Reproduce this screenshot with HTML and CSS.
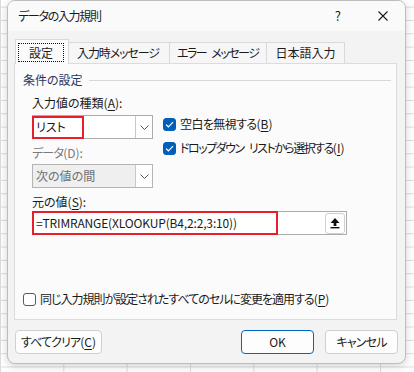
FILE: index.html
```html
<!DOCTYPE html>
<html lang="ja">
<head>
<meta charset="utf-8">
<title>データの入力規則</title>
<link rel="stylesheet" href="styles.css">
</head>
<body>
<div class="dialog">
  <div class="titlebar">
    <span class="title">データの入力規則</span>
    <span class="help">?</span>
    <svg class="close" width="10" height="10" viewBox="0 0 10 10"><path d="M0.5 0.5L9.5 9.5M9.5 0.5L0.5 9.5" stroke="#1a1a1a" stroke-width="1.1" fill="none"/></svg>
  </div>
  <div class="body">
    <div class="tabs">
      <div class="tab active"><span class="focus">設定</span></div>
      <div class="tab tab-input">入力時メッセージ</div>
      <div class="tab tab-error">エラー メッセージ</div>
      <div class="tab">日本語入力</div>
    </div>
    <div class="panel">
      <div class="group"><span>条件の設定</span><i class="rule"></i></div>
      <div class="section">
        <div class="row1">
          <div class="col-left">
            <div class="label">入力値の種類(<u>A</u>):</div>
            <div class="combo">
              <span class="val">リスト</span>
              <span class="drop"><svg width="9" height="5" viewBox="0 0 9 5"><path d="M0.5 0.5L4.5 4.5L8.5 0.5" stroke="#555" fill="none"/></svg></span>
              <span class="mark mark-list"></span>
            </div>
            <div class="label dis"><span class="jp-data">データ</span>(D):</div>
            <div class="combo disabled">
              <span class="val">次の値の間</span>
              <span class="drop"><svg width="9" height="5" viewBox="0 0 9 5"><path d="M0.5 0.5L4.5 4.5L8.5 0.5" stroke="#555" fill="none"/></svg></span>
            </div>
          </div>
          <div class="col-right">
            <div class="check"><span class="box on"><svg width="9" height="7" viewBox="0 0 9 7"><path d="M1 3.6L3.4 5.8L8 1.2" stroke="#fff" stroke-width="1.2" fill="none"/></svg></span><span class="txt"><span class="jp-blank">空白を無視する</span>(<u>B</u>)</span></div>
            <div class="check"><span class="box on"><svg width="9" height="7" viewBox="0 0 9 7"><path d="M1 3.6L3.4 5.8L8 1.2" stroke="#fff" stroke-width="1.2" fill="none"/></svg></span><span class="txt"><span class="jp-drop">ドロップダウン リストから選択する</span>(<u>I</u>)</span></div>
          </div>
        </div>
        <div class="label label-src">元の値(<u>S</u>):</div>
        <div class="source">
          <span class="formula">=TRIMRANGE(XLOOKUP(B4,2:2,3:10))</span>
          <span class="pick"><svg width="10" height="12" viewBox="0 0 10 12"><path d="M5 1L9.5 6H6.4V9H3.6V6H0.5Z" fill="#111"/><rect x="0.5" y="10" width="9" height="1.4" fill="#111"/></svg></span>
          <span class="mark mark-src"></span>
        </div>
      </div>
      <div class="check apply"><span class="box"></span><span class="txt"><span class="jp-apply">同じ入力規則が設定されたすべてのセルに変更を適用する</span>(<u>P</u>)</span></div>
    </div>
    <div class="buttons">
      <button class="btn btn-clear"><span class="jp-clear">すべてクリア</span>(<u>C</u>)</button>
      <span class="spacer"></span>
      <button class="btn btn-ok">OK</button>
      <button class="btn btn-cancel">キャンセル</button>
    </div>
  </div>
</div>
</body>
</html>
```

FILE: styles.css
```css
* { box-sizing: border-box; }
html, body { margin: 0; padding: 0; }
body {
  width: 414px;
  height: 372px;
  overflow: hidden;
  font-family: "Noto Sans CJK JP", "Noto Sans", sans-serif;
  font-size: 12px;
  color: #1a1a1a;
  font-feature-settings: "palt";
  text-autospace: no-autospace;
  background-color: #ffffff;
  background-image:
    linear-gradient(to right, #dcdcdc 1px, transparent 1px),
    linear-gradient(to bottom, #dcdcdc 1px, transparent 1px);
  background-size: 63.33px 13.33px;
  background-position: 0 6.67px;
}
u { text-decoration: underline; text-underline-offset: 2px; }

.dialog {
  margin-left: 7px;
  width: 399px;
  height: 364px;
  background: #f3f3f3;
  border: 1px solid #bdbdbd;
  border-radius: 8px;
  box-shadow: 0 2px 8px rgba(0, 0, 0, 0.18);
  display: flex;
  flex-direction: column;
  overflow: hidden;
}

.titlebar {
  height: 30px;
  flex: none;
  background: #fafafa;
  display: flex;
  align-items: center;
  padding-left: 10px;
  line-height: 16px;
}
.title { flex: 1; letter-spacing: -1.3px; }
.help { margin-right: 37px; font-size: 13px; }
.close { margin-right: 17px; display: block; }

.body {
  flex: 1;
  padding: 8px 8px 9px 6px;
  display: flex;
  flex-direction: column;
}

.tabs {
  height: 24px;
  flex: none;
  display: flex;
  align-items: flex-end;
  padding-left: 1px;
}
.tab {
  height: 21px;
  padding: 0 8px;
  border: 1px solid #d9d9d9;
  border-bottom: none;
  background: #f6f6f6;
  margin-left: -1px;
  line-height: 20px;
  white-space: nowrap;
}
.tab-input { letter-spacing: -1.1px; padding: 0 10px 0 8px; }
.tab-error { letter-spacing: -1.5px; word-spacing: 4px; padding: 0 8px 0 7px; }
.tab.active {
  margin-left: 0;
  height: 25px;
  margin-bottom: -1px;
  background: #fbfbfb;
  position: relative;
  z-index: 1;
  padding: 3px 4px 0 2px;
}
.focus {
  display: block;
  height: 19px;
  line-height: 17px;
  padding: 0 10px;
  border: 1px dotted #111;
}

.panel {
  height: 257px;
  flex: none;
  border: 1px solid #dcdcdc;
  background: #fbfbfb;
  padding: 8px 5px 0 8px;
}

.group {
  display: flex;
  align-items: center;
  gap: 6px;
  height: 16px;
  line-height: 16px;
  color: #25355e;
}
.rule { flex: 1; height: 1px; background: #d7d7d7; }

.section { margin: 7px 0 0 9px; }
.row1 { display: flex; gap: 10px; }
.col-left { width: 121px; }
.col-right { padding-top: 21px; display: flex; flex-direction: column; gap: 8px; }

.label { height: 16px; line-height: 16px; white-space: nowrap; }
.label.dis { color: #7a7a7a; margin-top: 6px; }
.jp-data { letter-spacing: -0.8px; }
.label-src { margin-top: 6px; }

.combo {
  position: relative;
  margin-top: 4px;
  height: 24px;
  border: 1px solid #acacac;
  background: #fff;
  display: flex;
  align-items: center;
}
.combo.disabled {
  margin-top: 3px;
  background: #efefef;
  border-color: #b4b4b4;
  color: #707070;
}
.val { flex: 1; padding-left: 3px; line-height: 16px; }
.drop {
  width: 17px;
  height: 22px;
  border-left: 1px solid #c8c8c8;
  background: #fff;
  display: flex;
  align-items: center;
  justify-content: center;
}
.drop svg { display: block; }

.mark {
  position: absolute;
  border: 2px solid #e5202a;
  pointer-events: none;
}
.mark-list { left: -1px; top: 0; width: 52px; height: 23px; }
.mark-src { left: -1px; top: -1px; width: 246px; height: 24px; }

.check {
  display: flex;
  align-items: center;
  gap: 4px;
  height: 16px;
  line-height: 16px;
  white-space: nowrap;
}
.jp-blank { letter-spacing: -0.6px; }
.jp-drop { letter-spacing: -1.5px; word-spacing: 4px; }
.jp-apply { letter-spacing: -1px; }
.box {
  width: 13px;
  height: 13px;
  border-radius: 3px;
  border: 1px solid #5a5a5a;
  background: #fff;
  display: flex;
  align-items: center;
  justify-content: center;
  flex: none;
}
.box.on { background: #005fb8; border-color: #005fb8; }
.box svg { display: block; }

.source {
  position: relative;
  margin-top: 1px;
  width: 315px;
  height: 24px;
  border: 1px solid #acacac;
  background: #fff;
  display: flex;
  align-items: center;
  padding: 0 1px 0 3px;
}
.formula { flex: 1; line-height: 16px; white-space: nowrap; letter-spacing: -0.15px; }
.pick {
  width: 20px;
  height: 21px;
  border: 1px solid #cfcfcf;
  border-radius: 3px;
  background: #fff;
  display: flex;
  align-items: center;
  justify-content: center;
}
.pick svg { display: block; }

.apply { margin-top: 56px; }

.buttons {
  display: flex;
  margin: 10px -1px 0 1px;
  height: 24px;
  flex: none;
}
.spacer { flex: 1; }
.btn {
  height: 24px;
  border: 1px solid #d0d0d0;
  border-radius: 4px;
  background: #fdfdfd;
  font-family: inherit;
  font-size: 12px;
  color: #1a1a1a;
  font-feature-settings: "palt";
  text-autospace: no-autospace;
  padding: 0;
  line-height: 16px;
}
.btn-clear { width: 87px; }
.jp-clear { letter-spacing: -0.9px; }
.btn-ok { width: 73px; border-color: #0067c0; margin-right: 11px; }
.btn-cancel { width: 73px; letter-spacing: -0.8px; }
```
